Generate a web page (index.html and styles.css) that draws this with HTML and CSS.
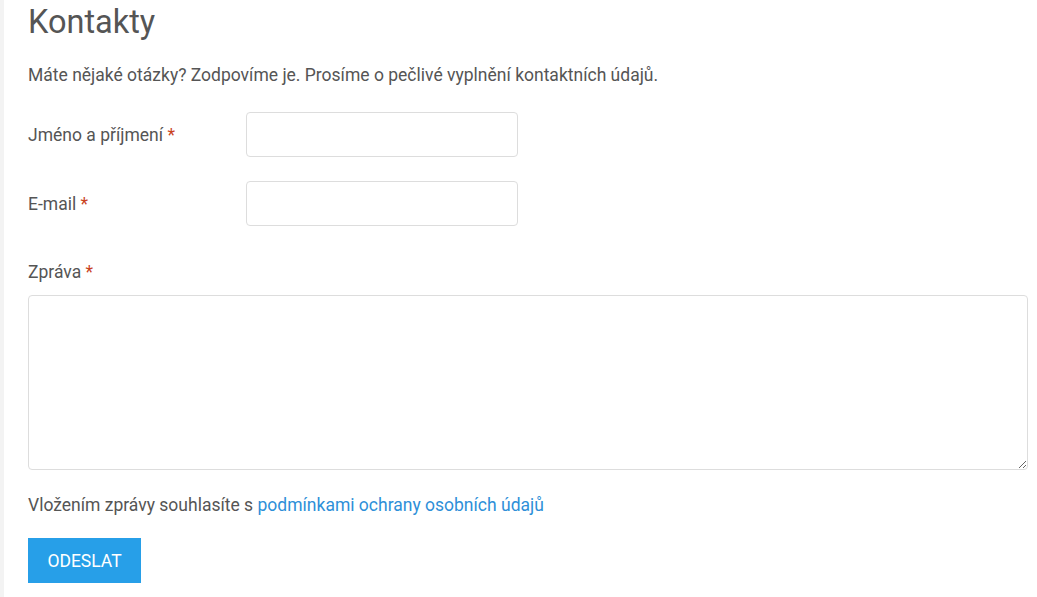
FILE: index.html
```html
<!DOCTYPE html>
<html lang="cs">
<head>
    <meta charset="UTF-8">
    <meta name="viewport" content="width=device-width, initial-scale=1.0">
    <title>Kontakty</title>
    <link rel="stylesheet" href="styles.css">
</head>
<body>
    <div class="page">
        <h1 class="title">Kontakty</h1>
        <p class="intro">Máte nějaké otázky? Zodpovíme je. Prosíme o pečlivé vyplnění kontaktních údajů.</p>

        <form class="contact-form">
            <div class="row">
                <label for="name">Jméno a příjmení <span class="req">*</span></label>
                <input type="text" id="name">
            </div>
            <div class="row">
                <label for="email">E-mail <span class="req">*</span></label>
                <input type="email" id="email">
            </div>
            <div class="message">
                <label for="msg">Zpráva <span class="req">*</span></label>
                <textarea id="msg"></textarea>
            </div>
            <p class="consent">Vložením zprávy souhlasíte s <a href="#">podmínkami ochrany osobních údajů</a></p>
            <button type="button" class="send">ODESLAT</button>
        </form>
    </div>
</body>
</html>
```

FILE: styles.css
```css
body {
    margin: 0;
    font-family: Roboto, "Liberation Sans", Arial, sans-serif;
    color: #555;
    background: #fff;
}

.page {
    border-left: 4px solid #f3f3f3;
    padding: 0 9px 0 24px;
    min-height: 597px;
    box-sizing: border-box;
}

.title {
    margin: 0;
    padding-top: 2px;
    font-size: 32.5px;
    font-weight: 400;
    line-height: 40px;
    color: #555;
}

.intro {
    margin: 20px 0 0;
    font-size: 17.5px;
    line-height: 26px;
}

.contact-form {
    margin-top: 24px;
}

.row {
    display: flex;
    align-items: center;
    margin-bottom: 24px;
}

.row label {
    width: 218px;
    font-size: 17.5px;
}

.row input {
    width: 272px;
    height: 45px;
    box-sizing: border-box;
    border: 1px solid #ddd;
    border-radius: 4px;
    padding: 6px 10px;
    font-size: 16px;
}

.req {
    color: #c9421d;
}

.message {
    padding-top: 9px;
}

.message label {
    display: block;
    font-size: 17.5px;
    line-height: 26px;
}

.message textarea {
    display: block;
    width: 1000px;
    height: 175px;
    box-sizing: border-box;
    margin-top: 10px;
    border: 1px solid #ddd;
    border-radius: 4px;
    resize: vertical;
    font-family: inherit;
}

.consent {
    margin: 22px 0 0;
    font-size: 17.5px;
    line-height: 26px;
}

.consent a {
    color: #2e8fd8;
    text-decoration: none;
}

.send {
    display: block;
    margin-top: 20px;
    width: 113px;
    height: 45px;
    border: none;
    background: #279fe8;
    color: #fff;
    font-family: inherit;
    font-size: 17.5px;
    cursor: pointer;
}
```
